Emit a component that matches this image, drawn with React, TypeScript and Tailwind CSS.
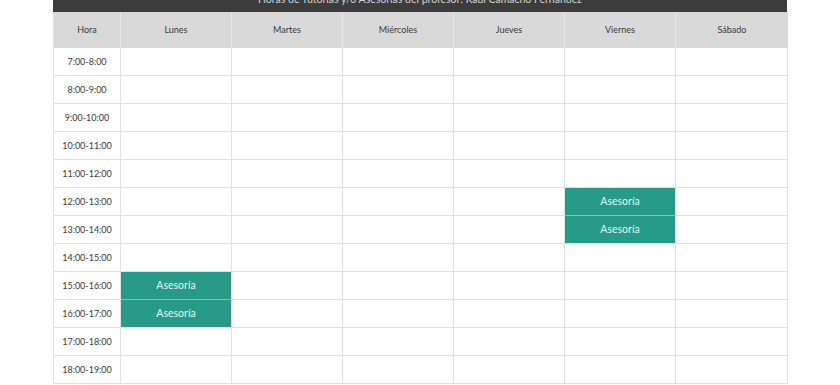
import React from "react";

const days = ["Lunes", "Martes", "Miércoles", "Jueves", "Viernes", "Sábado"];
const hours = [
  "7:00-8:00",
  "8:00-9:00",
  "9:00-10:00",
  "10:00-11:00",
  "11:00-12:00",
  "12:00-13:00",
  "13:00-14:00",
  "14:00-15:00",
  "15:00-16:00",
  "16:00-17:00",
  "17:00-18:00",
  "18:00-19:00",
];

const busy: Record<string, boolean> = {
  "5-4": true,
  "6-4": true,
  "8-0": true,
  "9-0": true,
};

export default function App() {
  return (
    <div
      className="w-[840px] h-[385px] overflow-hidden bg-white"
      style={{ fontFamily: "Lato, 'Noto Sans', sans-serif" }}
    >
      <div className="ml-[53px] w-[734px]">
        <div className="h-[12px] bg-[#3c3c3c] overflow-hidden flex justify-center">
          <div className="text-[10.5px] leading-[10px] -mt-[6px] text-[#d0d0d0] whitespace-nowrap">
            Horas de Tutorías y/o Asesorías del profesor: Raúl Camacho Fernández
          </div>
        </div>
        <div className="grid grid-cols-[67px_111px_111px_111px_111px_111px_112px] border-l border-[#e2e2e2]">
          <div className="h-[36px] bg-[#d9d9d9] border-r border-[#e6e6e6] flex items-center justify-center text-[9px] text-[#3a3a3a]">
            Hora
          </div>
          {days.map((d, i) => (
            <div
              key={d}
              className={
                i === 5
                  ? "h-[36px] bg-[#d9d9d9] flex items-center justify-center text-[9px] text-[#3a3a3a]"
                  : "h-[36px] bg-[#d9d9d9] border-r border-[#e6e6e6] flex items-center justify-center text-[9px] text-[#3a3a3a]"
              }
            >
              {d}
            </div>
          ))}
          {hours.map((h, r) => (
            <React.Fragment key={h}>
              <div className="h-[28px] border-r border-b border-[#e2e2e2] flex items-center justify-center text-[9px] text-[#3a3a3a]">
                {h}
              </div>
              {days.map((d, c) => {
                const on = busy[`${r}-${c}`];
                const nextOn = busy[`${r + 1}-${c}`];
                if (on) {
                  return (
                    <div
                      key={d}
                      className={
                        nextOn
                          ? "h-[28px] bg-[#289a88] border-r border-b border-r-[#e2e2e2] border-b-[#74c8b9] flex items-center justify-center text-[10.5px] text-[#e4f4f1]"
                          : "h-[28px] bg-[#289a88] border-r border-b border-[#e2e2e2] flex items-center justify-center text-[10.5px] text-[#e4f4f1]"
                      }
                    >
                      Asesoría
                    </div>
                  );
                }
                return (
                  <div
                    key={d}
                    className="h-[28px] border-r border-b border-[#e2e2e2]"
                  />
                );
              })}
            </React.Fragment>
          ))}
        </div>
      </div>
    </div>
  );
}
